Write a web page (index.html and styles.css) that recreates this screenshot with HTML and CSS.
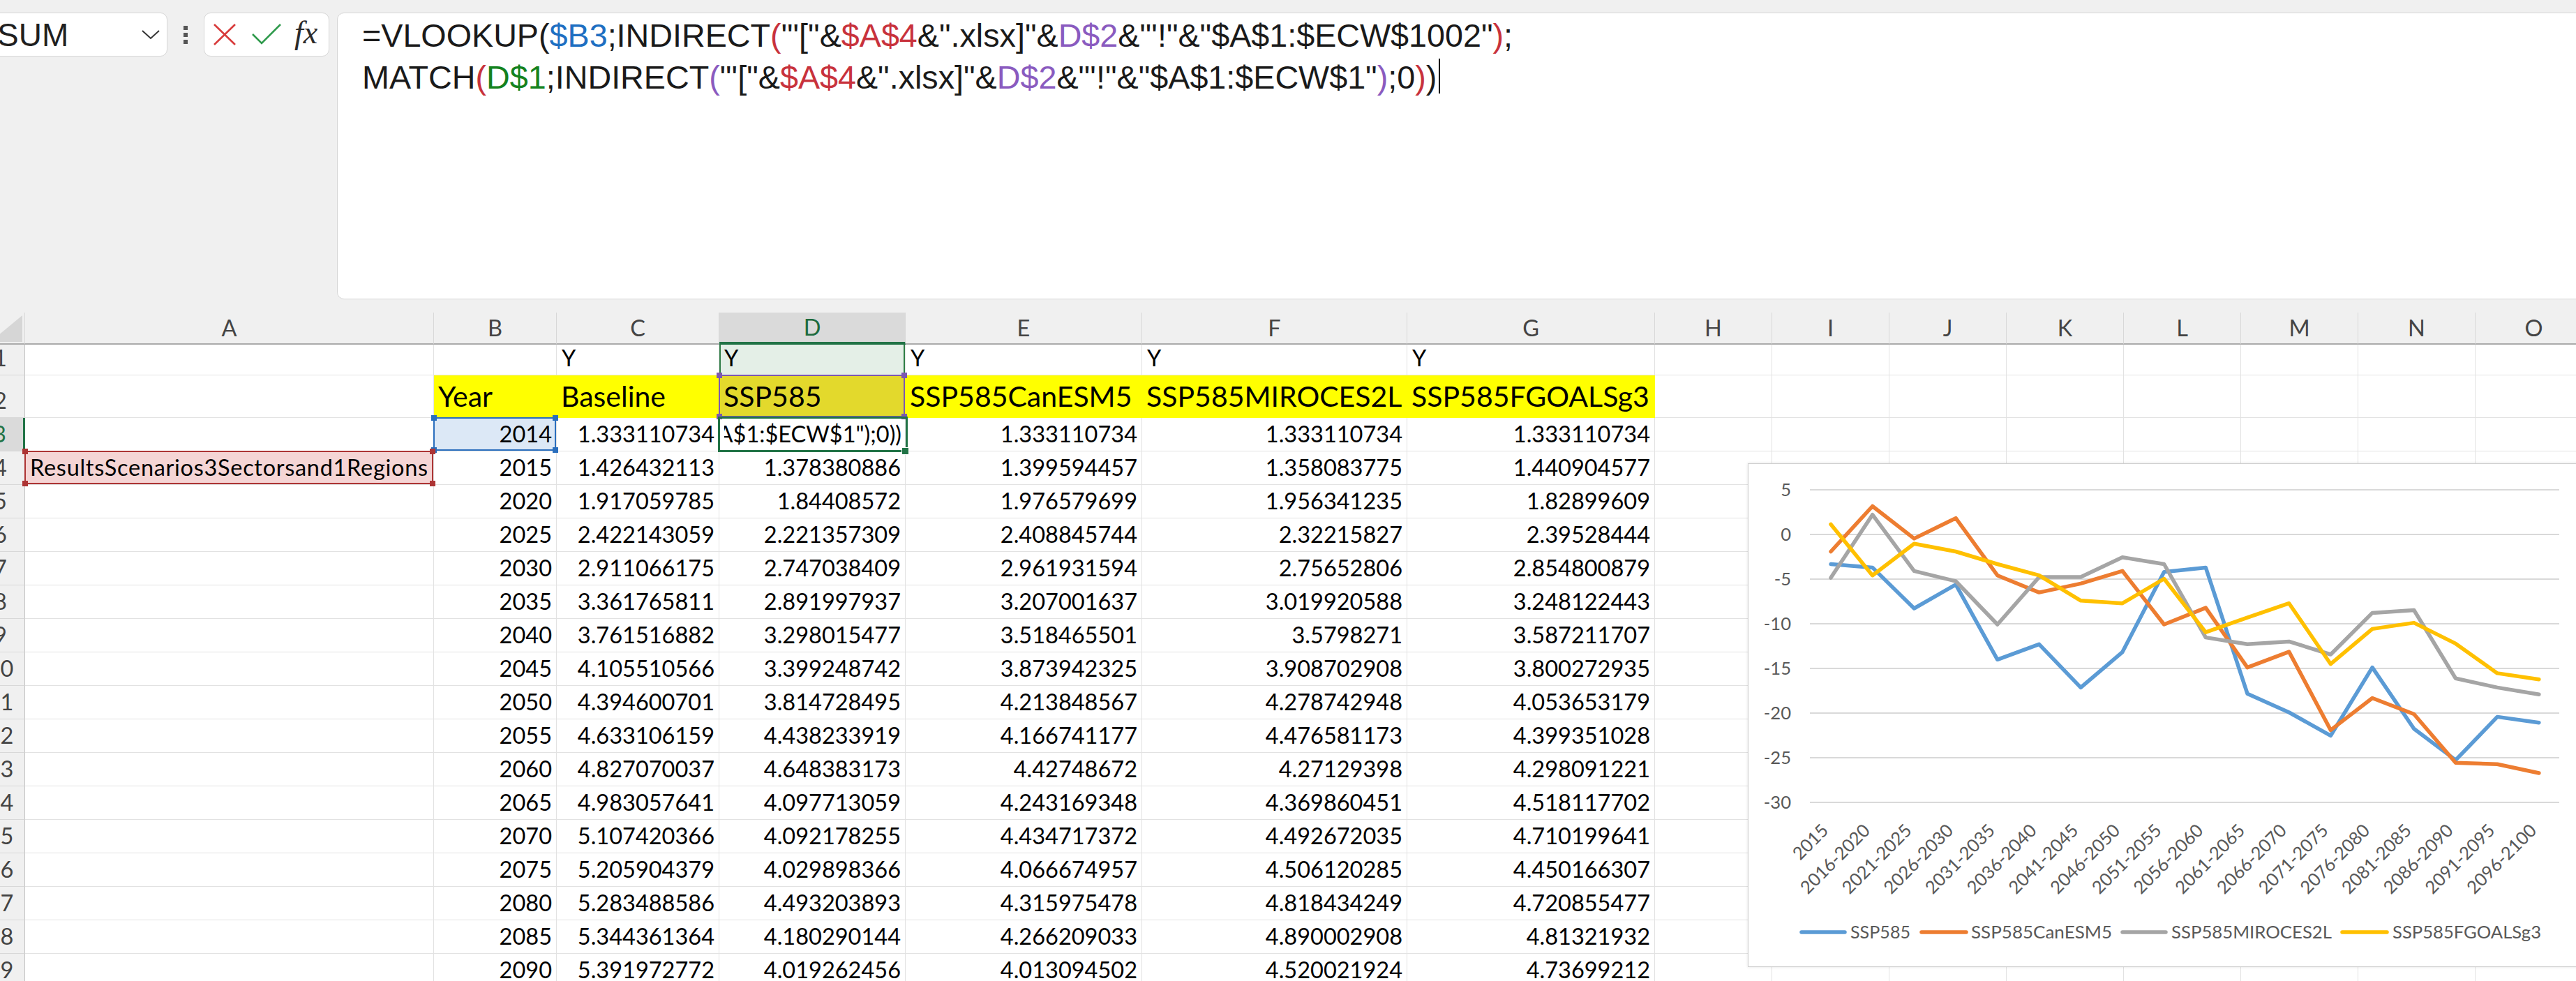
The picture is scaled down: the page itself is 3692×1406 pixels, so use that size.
FILE: index.html
```html
<!DOCTYPE html>
<html>
<head>
<meta charset="utf-8">
<link rel="stylesheet" href="styles.css">
</head>
<body>
<div class="bar">
  <div class="namebox">SUM<svg class="chev" width="26" height="14" viewBox="0 0 26 14"><polyline points="1,1 13,12 25,1" fill="none" stroke="#333" stroke-width="2"/></svg></div>
  <div class="dots"><i></i><i></i><i></i></div>
  <div class="fxbox">
    <svg width="180" height="63" viewBox="0 0 180 63">
      <line x1="15" y1="17" x2="45" y2="46" stroke="#d83b3b" stroke-width="2.6"/>
      <line x1="45" y1="17" x2="15" y2="46" stroke="#d83b3b" stroke-width="2.6"/>
      <polyline points="70,31 83,44 110,17" fill="none" stroke="#2f9a4c" stroke-width="2.6"/>
      <text x="130" y="44" class="fx">fx</text>
    </svg>
  </div>
  <div class="formula">
    <div>=VLOOKUP(<span class="rb">$B3</span>;INDIRECT<span class="rr">(</span>"'["&amp;<span class="rr">$A$4</span>&amp;".xlsx]"&amp;<span class="rp">D$2</span>&amp;"'!"&amp;"$A$1:$ECW$1002"<span class="rr">)</span>;</div>
    <div>MATCH<span class="rr">(</span><span class="rg">D$1</span>;INDIRECT<span class="rp">(</span>"'["&amp;<span class="rr">$A$4</span>&amp;".xlsx]"&amp;<span class="rp">D$2</span>&amp;"'!"&amp;"$A$1:$ECW$1"<span class="rp">)</span>;0<span class="rr">)</span>)<span class="caret"></span></div>
  </div>
</div>

<div class="sheet">
  <div class="hd corner"><div class="tri"></div></div>
  <div class="hd">A</div><div class="hd">B</div><div class="hd">C</div><div class="hd on">D</div><div class="hd">E</div><div class="hd">F</div><div class="hd">G</div><div class="hd">H</div><div class="hd">I</div><div class="hd">J</div><div class="hd">K</div><div class="hd">L</div><div class="hd">M</div><div class="hd">N</div><div class="hd">O</div>

  <div class="rh">1</div><div class="c"></div><div class="c"></div><div class="c">Y</div><div class="c d1">Y</div><div class="c">Y</div><div class="c">Y</div><div class="c">Y</div><div class="c"></div><div class="c"></div><div class="c"></div><div class="c"></div><div class="c"></div><div class="c"></div><div class="c"></div><div class="c"></div>

  <div class="rh">2</div><div class="c"></div><div class="c y hdr">Year</div><div class="c y hdr">Baseline</div><div class="c y hdr d2">SSP585<b class="hl pu"><i></i><i></i><i></i><i></i></b></div><div class="c y hdr">SSP585CanESM5</div><div class="c y hdr">SSP585MIROCES2L</div><div class="c y hdr">SSP585FGOALSg3</div><div class="c"></div><div class="c"></div><div class="c"></div><div class="c"></div><div class="c"></div><div class="c"></div><div class="c"></div><div class="c"></div>

  <div class="rh on">3</div><div class="c"></div><div class="c n b3">2014<b class="hl bl"><i></i><i></i><i></i><i></i></b></div><div class="c n">1.333110734</div><div class="c act"><span class="clip">=VLOOKUP($B3;INDIRECT("'["&amp;$A$4&amp;".xlsx]"&amp;D$2&amp;"'!"&amp;"$A$1:$ECW$1002");MATCH(D$1;INDIRECT("'["&amp;$A$4&amp;".xlsx]"&amp;D$2&amp;"'!"&amp;"$A$1:$ECW$1");0))</span><b class="sel"></b><b class="handle"></b></div><div class="c n">1.333110734</div><div class="c n">1.333110734</div><div class="c n">1.333110734</div><div class="c"></div><div class="c"></div><div class="c"></div><div class="c"></div><div class="c"></div><div class="c"></div><div class="c"></div><div class="c"></div>

  <div class="rh">4</div><div class="c a4">ResultsScenarios3Sectorsand1Regions<b class="hl rd"><i></i><i></i><i></i><i></i></b></div><div class="c n">2015</div><div class="c n">1.426432113</div><div class="c n">1.378380886</div><div class="c n">1.399594457</div><div class="c n">1.358083775</div><div class="c n">1.440904577</div><div class="c"></div><div class="c"></div><div class="c"></div><div class="c"></div><div class="c"></div><div class="c"></div><div class="c"></div><div class="c"></div>

  <div class="rh">5</div><div class="c"></div><div class="c n">2020</div><div class="c n">1.917059785</div><div class="c n">1.84408572</div><div class="c n">1.976579699</div><div class="c n">1.956341235</div><div class="c n">1.82899609</div><div class="c"></div><div class="c"></div><div class="c"></div><div class="c"></div><div class="c"></div><div class="c"></div><div class="c"></div><div class="c"></div>

  <div class="rh">6</div><div class="c"></div><div class="c n">2025</div><div class="c n">2.422143059</div><div class="c n">2.221357309</div><div class="c n">2.408845744</div><div class="c n">2.32215827</div><div class="c n">2.39528444</div><div class="c"></div><div class="c"></div><div class="c"></div><div class="c"></div><div class="c"></div><div class="c"></div><div class="c"></div><div class="c"></div>

  <div class="rh">7</div><div class="c"></div><div class="c n">2030</div><div class="c n">2.911066175</div><div class="c n">2.747038409</div><div class="c n">2.961931594</div><div class="c n">2.75652806</div><div class="c n">2.854800879</div><div class="c"></div><div class="c"></div><div class="c"></div><div class="c"></div><div class="c"></div><div class="c"></div><div class="c"></div><div class="c"></div>

  <div class="rh">8</div><div class="c"></div><div class="c n">2035</div><div class="c n">3.361765811</div><div class="c n">2.891997937</div><div class="c n">3.207001637</div><div class="c n">3.019920588</div><div class="c n">3.248122443</div><div class="c"></div><div class="c"></div><div class="c"></div><div class="c"></div><div class="c"></div><div class="c"></div><div class="c"></div><div class="c"></div>

  <div class="rh">9</div><div class="c"></div><div class="c n">2040</div><div class="c n">3.761516882</div><div class="c n">3.298015477</div><div class="c n">3.518465501</div><div class="c n">3.5798271</div><div class="c n">3.587211707</div><div class="c"></div><div class="c"></div><div class="c"></div><div class="c"></div><div class="c"></div><div class="c"></div><div class="c"></div><div class="c"></div>

  <div class="rh">10</div><div class="c"></div><div class="c n">2045</div><div class="c n">4.105510566</div><div class="c n">3.399248742</div><div class="c n">3.873942325</div><div class="c n">3.908702908</div><div class="c n">3.800272935</div><div class="c"></div><div class="c"></div><div class="c"></div><div class="c"></div><div class="c"></div><div class="c"></div><div class="c"></div><div class="c"></div>

  <div class="rh">11</div><div class="c"></div><div class="c n">2050</div><div class="c n">4.394600701</div><div class="c n">3.814728495</div><div class="c n">4.213848567</div><div class="c n">4.278742948</div><div class="c n">4.053653179</div><div class="c"></div><div class="c"></div><div class="c"></div><div class="c"></div><div class="c"></div><div class="c"></div><div class="c"></div><div class="c"></div>

  <div class="rh">12</div><div class="c"></div><div class="c n">2055</div><div class="c n">4.633106159</div><div class="c n">4.438233919</div><div class="c n">4.166741177</div><div class="c n">4.476581173</div><div class="c n">4.399351028</div><div class="c"></div><div class="c"></div><div class="c"></div><div class="c"></div><div class="c"></div><div class="c"></div><div class="c"></div><div class="c"></div>

  <div class="rh">13</div><div class="c"></div><div class="c n">2060</div><div class="c n">4.827070037</div><div class="c n">4.648383173</div><div class="c n">4.42748672</div><div class="c n">4.27129398</div><div class="c n">4.298091221</div><div class="c"></div><div class="c"></div><div class="c"></div><div class="c"></div><div class="c"></div><div class="c"></div><div class="c"></div><div class="c"></div>

  <div class="rh">14</div><div class="c"></div><div class="c n">2065</div><div class="c n">4.983057641</div><div class="c n">4.097713059</div><div class="c n">4.243169348</div><div class="c n">4.369860451</div><div class="c n">4.518117702</div><div class="c"></div><div class="c"></div><div class="c"></div><div class="c"></div><div class="c"></div><div class="c"></div><div class="c"></div><div class="c"></div>

  <div class="rh">15</div><div class="c"></div><div class="c n">2070</div><div class="c n">5.107420366</div><div class="c n">4.092178255</div><div class="c n">4.434717372</div><div class="c n">4.492672035</div><div class="c n">4.710199641</div><div class="c"></div><div class="c"></div><div class="c"></div><div class="c"></div><div class="c"></div><div class="c"></div><div class="c"></div><div class="c"></div>

  <div class="rh">16</div><div class="c"></div><div class="c n">2075</div><div class="c n">5.205904379</div><div class="c n">4.029898366</div><div class="c n">4.066674957</div><div class="c n">4.506120285</div><div class="c n">4.450166307</div><div class="c"></div><div class="c"></div><div class="c"></div><div class="c"></div><div class="c"></div><div class="c"></div><div class="c"></div><div class="c"></div>

  <div class="rh">17</div><div class="c"></div><div class="c n">2080</div><div class="c n">5.283488586</div><div class="c n">4.493203893</div><div class="c n">4.315975478</div><div class="c n">4.818434249</div><div class="c n">4.720855477</div><div class="c"></div><div class="c"></div><div class="c"></div><div class="c"></div><div class="c"></div><div class="c"></div><div class="c"></div><div class="c"></div>

  <div class="rh">18</div><div class="c"></div><div class="c n">2085</div><div class="c n">5.344361364</div><div class="c n">4.180290144</div><div class="c n">4.266209033</div><div class="c n">4.890002908</div><div class="c n">4.81321932</div><div class="c"></div><div class="c"></div><div class="c"></div><div class="c"></div><div class="c"></div><div class="c"></div><div class="c"></div><div class="c"></div>

  <div class="rh">19</div><div class="c"></div><div class="c n">2090</div><div class="c n">5.391972772</div><div class="c n">4.019262456</div><div class="c n">4.013094502</div><div class="c n">4.520021924</div><div class="c n">4.73699212</div><div class="c"></div><div class="c"></div><div class="c"></div><div class="c"></div><div class="c"></div><div class="c"></div><div class="c"></div><div class="c"></div>
</div>

<div class="chart">
  <svg width="1230" height="720" viewBox="0 0 1230 720">
    <g class="grid">
      <line x1="88" y1="37" x2="1162" y2="37"/>
      <line x1="88" y1="101" x2="1162" y2="101"/>
      <line x1="88" y1="165" x2="1162" y2="165"/>
      <line x1="88" y1="229" x2="1162" y2="229"/>
      <line x1="88" y1="293" x2="1162" y2="293"/>
      <line x1="88" y1="357" x2="1162" y2="357"/>
      <line x1="88" y1="421" x2="1162" y2="421"/>
      <line x1="88" y1="485" x2="1162" y2="485"/>
    </g>
    <g class="lbl ylab">
      <text x="61" y="46">5</text>
      <text x="61" y="110">0</text>
      <text x="61" y="174">-5</text>
      <text x="61" y="238">-10</text>
      <text x="61" y="302">-15</text>
      <text x="61" y="366">-20</text>
      <text x="61" y="430">-25</text>
      <text x="61" y="494">-30</text>
    </g>
    <g class="lbl xlab">
      <text transform="translate(116,527) rotate(-45)">2015</text>
      <text transform="translate(175.7,527) rotate(-45)">2016-2020</text>
      <text transform="translate(235.4,527) rotate(-45)">2021-2025</text>
      <text transform="translate(295.1,527) rotate(-45)">2026-2030</text>
      <text transform="translate(354.8,527) rotate(-45)">2031-2035</text>
      <text transform="translate(414.5,527) rotate(-45)">2036-2040</text>
      <text transform="translate(474.2,527) rotate(-45)">2041-2045</text>
      <text transform="translate(533.9,527) rotate(-45)">2046-2050</text>
      <text transform="translate(593.6,527) rotate(-45)">2051-2055</text>
      <text transform="translate(653.3,527) rotate(-45)">2056-2060</text>
      <text transform="translate(713,527) rotate(-45)">2061-2065</text>
      <text transform="translate(772.7,527) rotate(-45)">2066-2070</text>
      <text transform="translate(832.4,527) rotate(-45)">2071-2075</text>
      <text transform="translate(892.1,527) rotate(-45)">2076-2080</text>
      <text transform="translate(951.8,527) rotate(-45)">2081-2085</text>
      <text transform="translate(1011.5,527) rotate(-45)">2086-2090</text>
      <text transform="translate(1071.2,527) rotate(-45)">2091-2095</text>
      <text transform="translate(1130.9,527) rotate(-45)">2096-2100</text>
    </g>
    <g class="series">
      <polyline class="s1" points="118,143.5 177.7,148.4 237.4,207 297.1,172.8 356.8,280.3 416.5,258.3 476.2,320.4 535.9,269.6 595.6,154.8 655.3,148.4 715,329.2 774.7,356 834.4,389.3 894.1,291.6 953.8,379.5 1013.5,424.4 1073.2,362.4 1132.9,370.7"/>
      <polyline class="s2" points="118,125.5 177.7,60.5 237.4,106.9 297.1,77.6 356.8,159.7 416.5,184.1 476.2,171.4 535.9,153.3 595.6,230 655.3,206.1 715,291.6 774.7,269.1 834.4,381.4 894.1,335.5 953.8,358.5 1013.5,428.3 1073.2,430.3 1132.9,443"/>
      <polyline class="s3" points="118,163.1 177.7,72.7 237.4,153.3 297.1,168 356.8,230 416.5,162.1 476.2,162.1 535.9,133.8 595.6,143.5 655.3,248.6 715,258.3 774.7,254.4 834.4,273 894.1,213.4 953.8,209.5 1013.5,307.2 1073.2,320.4 1132.9,330.2"/>
      <polyline class="s4" points="118,86.4 177.7,159.7 237.4,114.2 297.1,125.5 356.8,143.5 416.5,159.7 476.2,195.8 535.9,199.7 595.6,164.5 655.3,241.2 715,220.2 774.7,199.7 834.4,286.7 894.1,236.4 953.8,227.6 1013.5,257.4 1073.2,299.9 1132.9,308.7"/>
    </g>
    <g class="legend">
      <line class="s1" x1="76" y1="671" x2="138" y2="671"/>
      <line class="s2" x1="248" y1="671" x2="312" y2="671"/>
      <line class="s3" x1="536" y1="671" x2="598" y2="671"/>
      <line class="s4" x1="851" y1="671" x2="915" y2="671"/>
    </g>
    <g class="lbl leg">
      <text x="146" y="680" textLength="86" lengthAdjust="spacingAndGlyphs">SSP585</text>
      <text x="319" y="680" textLength="202" lengthAdjust="spacingAndGlyphs">SSP585CanESM5</text>
      <text x="606" y="680" textLength="230" lengthAdjust="spacingAndGlyphs">SSP585MIROCES2L</text>
      <text x="923" y="680" textLength="213" lengthAdjust="spacingAndGlyphs">SSP585FGOALSg3</text>
    </g>
  </svg>
</div>
</body>
</html>
```

FILE: styles.css
```css
* { box-sizing: border-box; }
html, body { margin: 0; padding: 0; }
body {
  width: 3692px;
  height: 1406px;
  overflow: hidden;
  position: relative;
  background: #f0f0f0;
  font-family: "Liberation Sans", Arial, sans-serif;
}

/* ---------- formula bar ---------- */
.bar {
  display: flex;
  align-items: flex-start;
  padding-top: 18px;
  height: 429px;
}
.namebox {
  margin-left: -25px;
  width: 265px;
  height: 63px;
  background: #fff;
  border: 1px solid #d6d6d6;
  border-radius: 10px;
  display: flex;
  align-items: center;
  padding-left: 20px;
  font-size: 46px;
  color: #1f1f1f;
}
.chev { margin-left: auto; margin-right: 10px; }
.dots {
  width: 52px;
  height: 63px;
  display: flex;
  flex-direction: column;
  align-items: center;
  justify-content: center;
  gap: 4px;
}
.dots i { display: block; width: 6px; height: 6px; background: #555; }
.fxbox {
  width: 180px;
  height: 63px;
  background: #fff;
  border: 1px solid #d6d6d6;
  border-radius: 10px;
  overflow: hidden;
}
.fxbox svg { display: block; margin: -1px 0 0 -1px; }
.fx {
  font-family: "Liberation Serif", "DejaVu Serif", serif;
  font-style: italic;
  font-size: 46px;
  fill: #2b2b2b;
}
.formula {
  flex: 1;
  margin-left: 11px;
  margin-right: -30px;
  height: 411px;
  background: #fff;
  border: 1px solid #d6d6d6;
  border-radius: 10px;
  padding: 2px 0 0 35px;
  font-size: 46.7px;
  line-height: 60px;
  color: #1a1a1a;
  white-space: nowrap;
}
.rb { color: #1e6fc2; }
.rr { color: #c8323c; }
.rp { color: #8a5bbf; }
.rg { color: #14821e; }
.caret {
  display: inline-block;
  width: 2px;
  height: 50px;
  background: #000;
  vertical-align: -7px;
  margin-left: 3px;
}

/* ---------- sheet grid ---------- */
.sheet {
  display: grid;
  grid-template-columns: 70px 586px 176px 233px 267px 339px 380px 355px repeat(8, 168px);
  grid-template-rows: 46px 44px 61px repeat(17, 48px);
  margin: 19px 0 0 -34px;
  font-family: Lato, "Liberation Sans", sans-serif;
  font-size: 32.5px;
  color: #000;
}
.c {
  position: relative;
  background: #fff;
  border-right: 1px solid #e2e2e2;
  border-bottom: 1px solid #e2e2e2;
  display: flex;
  align-items: flex-end;
  padding: 0 6px 0 7px;
  line-height: 48px;
  white-space: nowrap;
}
.n { justify-content: flex-end; }
.hd {
  background: #f0f0f0;
  border-right: 1px solid #d8d8d8;
  border-bottom: 2px solid #ababab;
  display: flex;
  align-items: center;
  justify-content: center;
  color: #444;
  line-height: 1;
}
.hd.on {
  background: #dadada;
  color: #1e6b3e;
  border-bottom: 4px solid #217346;
}
.corner {
  background: #f0f0f0;
  align-items: flex-end;
  justify-content: flex-end;
  padding: 0 3px 2px 0;
}
.tri {
  width: 46px;
  height: 38px;
  background: #d6d6d6;
  clip-path: polygon(100% 0, 100% 100%, 0 100%);
}
.rh {
  background: #f0f0f0;
  border-right: 1px solid #c4c4c4;
  border-bottom: 1px solid #d8d8d8;
  display: flex;
  align-items: flex-end;
  justify-content: center;
  color: #444;
  line-height: 48px;
}
.rh.on {
  background: #dadada;
  color: #217346;
  border-right: 3px solid #217346;
}
.y { background: #ffff00; border-color: #ffff00; }
.hdr { font-size: 41px; line-height: 60px; padding-left: 6px; }
.d1 {
  background: #e4efe7;
  box-shadow: inset 2px 0 0 #2f7d46, inset -2px 0 0 #2f7d46;
}
.d2 { background: #e3d92c; }
.b3 { background: #dce8f6; }
.a4 { background: #f5d5d5; letter-spacing: 0.7px; }

/* reference highlight overlays */
.hl {
  position: absolute;
  top: -1px;
  left: -1px;
  right: 0;
  bottom: 0;
  border: 2px solid currentColor;
  z-index: 2;
}
.hl i {
  position: absolute;
  width: 8px;
  height: 8px;
  background: currentColor;
}
.hl i:nth-child(1) { left: -5px; top: -5px; }
.hl i:nth-child(2) { right: -5px; top: -5px; }
.hl i:nth-child(3) { left: -5px; bottom: -5px; }
.hl i:nth-child(4) { right: -5px; bottom: -5px; }
.pu { color: #7d58b0; }
.bl { color: #2a6ebd; }
.rd { color: #ad3434; }

/* active cell */
.act { padding-right: 5px; }
.clip {
  display: flex;
  justify-content: flex-end;
  overflow: hidden;
  width: 100%;
}
.sel {
  position: absolute;
  top: -2px;
  left: -2px;
  right: -4px;
  bottom: -2px;
  border: 3px solid #217346;
  z-index: 3;
}
.handle {
  position: absolute;
  right: -6px;
  bottom: -6px;
  width: 11px;
  height: 11px;
  background: #217346;
  border: 1px solid #fff;
  z-index: 4;
}

/* ---------- chart ---------- */
.chart {
  position: absolute;
  left: 2506px;
  top: 665px;
  width: 1230px;
  height: 720px;
  background: #fff;
  box-shadow: 0 0 0 1px #cfcfcf, 0 0 4px 1px rgba(0, 0, 0, 0.12);
  z-index: 10;
}
.chart svg { display: block; }
.grid line { stroke: #d9d9d9; stroke-width: 2; }
.lbl text {
  font-family: Lato, "Liberation Sans", sans-serif;
  font-size: 25.6px;
  fill: #595959;
}
.ylab text { text-anchor: end; }
.xlab text { text-anchor: end; }
.series polyline, .legend line {
  fill: none;
  stroke-width: 5.5;
  stroke-linejoin: round;
  stroke-linecap: round;
}
.s1 { stroke: #5b9bd5; }
.s2 { stroke: #ed7d31; }
.s3 { stroke: #a5a5a5; }
.s4 { stroke: #ffc000; }
```
